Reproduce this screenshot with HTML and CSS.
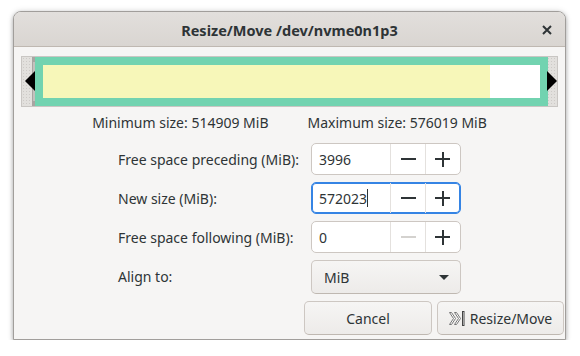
FILE: index.html
```html
<!DOCTYPE html>
<html lang="en">
<head>
  <meta charset="UTF-8">
  <title>Resize/Move /dev/nvme0n1p3</title>
  <link rel="stylesheet" href="styles.css">
</head>
<body>

  <!-- Dialog window -->
  <div class="window">
    <div class="titlebar">
      <span class="title">Resize/Move /dev/nvme0n1p3</span>
      <svg class="close" width="10" height="10" viewBox="0 0 10 10">
        <path d="M1 1 L9 9 M9 1 L1 9" stroke="#2e3436" stroke-width="2" fill="none"/>
      </svg>
    </div>

    <div class="content">
      <!-- Partition graphic -->
      <div class="partbar">
        <div class="side side-left"><div class="handle"></div></div>
        <div class="frame">
          <div class="used" style="width: 447px"></div>
          <div class="unused"></div>
        </div>
        <div class="side side-right"></div>
        <div class="arrow arrow-left"></div>
        <div class="arrow arrow-right"></div>
      </div>

      <div class="limits">
        <span>Minimum size: 514909 MiB</span>
        <span>Maximum size: 576019 MiB</span>
      </div>

      <!-- Form -->
      <div class="form">
        <label>Free space preceding (MiB):</label>
        <div class="spin">
          <span class="value">3996</span>
          <span class="btn minus"></span>
          <span class="btn plus"></span>
        </div>

        <label>New size (MiB):</label>
        <div class="spin focused">
          <span class="value">572023<i class="caret"></i></span>
          <span class="btn minus"></span>
          <span class="btn plus"></span>
        </div>

        <label>Free space following (MiB):</label>
        <div class="spin">
          <span class="value">0</span>
          <span class="btn minus disabled"></span>
          <span class="btn plus"></span>
        </div>

        <label>Align to:</label>
        <div class="combo">
          <span>MiB</span>
          <span class="drop"></span>
        </div>
      </div>

      <!-- Action buttons -->
      <div class="actions">
        <button class="button">Cancel</button>
        <button class="button">
          <svg class="icon" width="17" height="15" viewBox="0 0 17 15">
            <path d="M0.5 1.5 H2.5 L6.5 7.5 L2.5 13.5 H0.5 L4.5 7.5 Z" fill="#fff" stroke="#777" stroke-width="1"/>
            <path d="M5.5 1.5 H7.5 L11.5 7.5 L7.5 13.5 H5.5 L9.5 7.5 Z" fill="#fff" stroke="#777" stroke-width="1"/>
            <rect x="13.5" y="0.5" width="1.5" height="14" fill="#fff" stroke="#444" stroke-width="1"/>
          </svg>
          Resize/Move
        </button>
      </div>
    </div>
  </div>

</body>
</html>
```

FILE: styles.css
```css
/* Reset / page */
* {
  margin: 0;
  padding: 0;
  box-sizing: border-box;
}

body {
  background: #ffffff;
  font-family: "Noto Sans", "Open Sans", sans-serif;
  font-size: 14px;
  color: #2e3436;
}

/* Dialog window */
.window {
  margin: 11px 0 0 13px;
  width: 553px;
  height: 329px;
  background: #f6f5f4;
  border: 1px solid #a19e9b;
  border-radius: 8px 8px 0 0;
  box-shadow: 0 2px 4px rgba(0, 0, 0, 0.28), 0 0 6px rgba(0, 0, 0, 0.12);
  display: flex;
  flex-direction: column;
}

.titlebar {
  position: relative;
  height: 35px;
  flex: none;
  border-bottom: 1px solid #bfb8b1;
  border-radius: 7px 7px 0 0;
  background: linear-gradient(to bottom, #e2dfdc, #d9d5d1);
  display: flex;
  align-items: center;
  justify-content: center;
}
.title {
  font-weight: bold;
  font-size: 14.5px;
  margin-top: 1px;
}
.close {
  position: absolute;
  right: 13px;
  top: 13px;
}

.content {
  flex: 1;
  padding: 9px 1px 1px;
  display: flex;
  flex-direction: column;
}

/* Partition graphic */
.partbar {
  position: relative;
  margin: 0 6px;
  height: 51px;
  border: 1px solid #c9c6c3;
  display: flex;
  background-color: #e2e0dd;
  background-image: radial-gradient(#cdcac7 0.6px, transparent 0.9px);
  background-size: 3px 3px;
}
.side-left {
  width: 13px;
  display: flex;
  justify-content: flex-end;
}
.handle {
  width: 3px;
  background: #c4c1be;
  border-left: 1px solid #a8a5a2;
  border-top: 5px solid #a8a5a2;
  border-bottom: 5px solid #a8a5a2;
}
.side-right {
  width: 9px;
}
.frame {
  flex: 1;
  border: 8px solid #72d3b0;
  display: flex;
}
.used {
  background: #f7f7b9;
}
.unused {
  flex: 1;
  background: #ffffff;
}
.arrow {
  position: absolute;
  top: 14px;
  width: 0;
  height: 0;
  border-top: 10px solid transparent;
  border-bottom: 10px solid transparent;
}
.arrow-left {
  left: 3px;
  border-right: 10px solid #000;
}
.arrow-right {
  right: 0;
  border-left: 10px solid #000;
}

/* Min / max sizes */
.limits {
  margin-top: 6px;
  line-height: 20px;
  display: flex;
  justify-content: center;
  gap: 39px;
}

/* Form grid */
.form {
  margin-top: 10px;
  display: grid;
  grid-template-columns: 179px 150px;
  grid-auto-rows: 32px;
  column-gap: 14px;
  row-gap: 7px;
  justify-content: center;
  align-items: center;
}
.form label {
  white-space: nowrap;
}

.spin {
  height: 32px;
  display: flex;
  background: #ffffff;
  border: 1px solid #cdc7c2;
  border-radius: 5px;
}
.spin.focused {
  border-color: #3584e4;
  box-shadow: inset 0 0 0 1px #3584e4;
}
.spin .value {
  flex: 1;
  padding-left: 7px;
  display: flex;
  align-items: center;
}
.caret {
  display: inline-block;
  width: 1px;
  height: 18px;
  background: #2e3436;
}
.spin .btn {
  position: relative;
  width: 35px;
  border-left: 1px solid #e4e1de;
}
.spin .btn:before {
  content: "";
  position: absolute;
  left: 10px;
  top: 14px;
  width: 15px;
  height: 2px;
  background: #2e3436;
}
.spin .plus:after {
  content: "";
  position: absolute;
  left: 16px;
  top: 8px;
  width: 2px;
  height: 15px;
  background: #2e3436;
}
.spin .plus:before {
  left: 9px;
  top: 14px;
}
.spin .disabled:before {
  background: #d4d2cf;
}

.combo {
  height: 34px;
  align-self: start;
  display: flex;
  align-items: center;
  justify-content: space-between;
  padding: 0 11px 0 12px;
  border: 1px solid #cdc7c2;
  border-bottom-color: #bfb8b1;
  border-radius: 5px;
  background: linear-gradient(to bottom, #f6f5f4, #edebe9);
}
.drop {
  width: 0;
  height: 0;
  border-left: 5px solid transparent;
  border-right: 5px solid transparent;
  border-top: 5px solid #2e3436;
}

/* Action buttons */
.actions {
  margin-top: 9px;
  display: flex;
  justify-content: flex-end;
  gap: 5px;
}
.button {
  width: 127px;
  height: 34px;
  font: inherit;
  color: #2e3436;
  border: 1px solid #cdc7c2;
  border-bottom-color: #bfb8b1;
  border-radius: 5px;
  background: linear-gradient(to bottom, #f6f5f4, #edebe9);
  display: flex;
  align-items: center;
  justify-content: center;
  gap: 4px;
}
.button:first-child {
  width: 128px;
}
.icon {
  flex: none;
}
```
